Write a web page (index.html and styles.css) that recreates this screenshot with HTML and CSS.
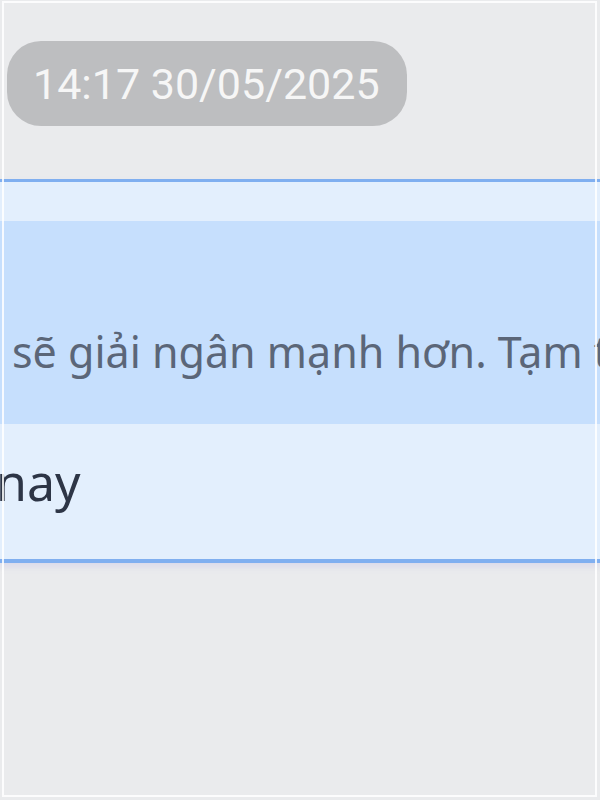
FILE: index.html
```html
<!DOCTYPE html>
<html lang="vi">
<head>
<meta charset="utf-8">
<title>Chat</title>
<link rel="stylesheet" href="styles.css">
</head>
<body>
<div class="chat">
  <div class="stamp-row">
    <span class="stamp">14:17 30/05/2025</span>
  </div>
  <div class="card">
    <div class="card-head"></div>
    <div class="quote">
      <p class="quote-text">sẽ giải ngân mạnh hơn. Tạm tính</p>
    </div>
    <div class="card-body">
      <p class="body-text">nay</p>
    </div>
  </div>
</div>
<div class="frame"></div>
</body>
</html>
```
FILE: styles.css
```css
html, body {
  margin: 0;
  padding: 0;
  width: 600px;
  height: 800px;
  overflow: hidden;
  background: #eaebed;
}

.chat {
  height: 800px;
  padding-top: 41px;
  box-sizing: border-box;
  overflow: hidden;
}

.stamp-row {
  display: flex;
  padding-left: 7px;
}

.stamp {
  display: inline-flex;
  align-items: center;
  height: 85px;
  padding: 0 27px 0 26px;
  border-radius: 34px;
  background: #bdbec0;
  color: #f6f6f6;
  font-family: Roboto, "Noto Sans", sans-serif;
  font-size: 43px;
}

.card {
  margin-top: 53px;
  background: #e3effd;
  border-top: 3px solid #80aff0;
  border-bottom: 4px solid #80aff0;
  box-shadow: 0 4px 6px rgba(180, 170, 230, 0.25);
}

.card-head {
  height: 39px;
}

.quote {
  height: 203px;
  background: #c6dffd;
  display: flex;
  align-items: flex-end;
  overflow: hidden;
}

.quote-text {
  margin: 0 0 51px 12px;
  white-space: nowrap;
  font-family: "Noto Sans", sans-serif;
  font-size: 43px;
  line-height: 1;
  color: #5b6678;
}

.card-body {
  height: 135px;
  display: flex;
  align-items: flex-start;
}

.body-text {
  margin: 33px 0 0 -4px;
  font-family: "Noto Sans", sans-serif;
  font-size: 50px;
  line-height: 1;
  color: #2d3546;
}

.frame {
  position: absolute;
  left: 2px;
  top: 1px;
  width: 591px;
  height: 792px;
  border: 2px solid rgba(255, 255, 255, 0.85);
  pointer-events: none;
}
```
